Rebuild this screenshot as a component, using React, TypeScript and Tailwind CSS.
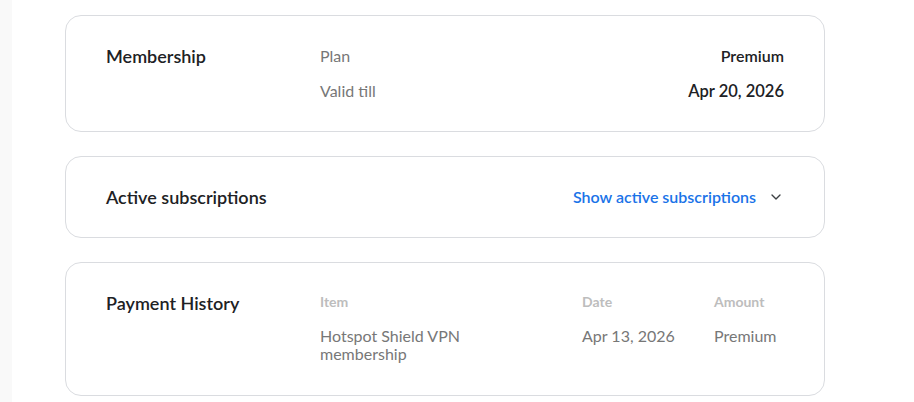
import { ChevronDown } from "lucide-react";

const font = { fontFamily: "Lato, 'Open Sans', sans-serif" };

const Card = ({ children, className = "" }: { children: React.ReactNode; className?: string }) => (
  <div className={`rounded-2xl border border-[#dadce0] bg-white px-10 ${className}`}>{children}</div>
);

const App = () => {
  return (
    <div className="flex min-h-screen bg-white" style={font}>
      <div className="w-3 shrink-0 bg-[#f9f9f9]" />
      <div className="flex w-[760px] flex-col gap-6 pl-[53px] pt-[15px] box-content">
        {/* Membership */}
        <Card className="py-7">
          <div className="flex">
            <h2 className="w-[214px] shrink-0 text-[18px] font-semibold leading-6 text-[#202124]">Membership</h2>
            <div className="flex flex-1 flex-col gap-[11px]">
              <div className="flex justify-between leading-6">
                <span className="text-[16px] text-[#777777]">Plan</span>
                <span className="text-[16px] font-semibold text-[#202124]">Premium</span>
              </div>
              <div className="flex justify-between leading-6">
                <span className="text-[16px] text-[#777777]">Valid till</span>
                <span className="text-[16.5px] font-semibold text-[#202124]">Apr 20, 2026</span>
              </div>
            </div>
          </div>
        </Card>

        {/* Active subscriptions */}
        <Card className="py-7">
          <div className="flex items-center justify-between">
            <h2 className="text-[18px] font-semibold leading-6 text-[#202124]">Active subscriptions</h2>
            <button className="flex items-center gap-3 text-[16px] font-semibold leading-6 text-[#1a73e8]">
              Show active subscriptions
              <ChevronDown className="h-4 w-4 text-[#3c4043]" strokeWidth={2} />
            </button>
          </div>
        </Card>

        {/* Payment history */}
        <Card className="pt-7 pb-8">
          <div className="grid grid-cols-[214px_262px_132px_1fr]">
            <h2 className="text-[18px] font-semibold leading-6 text-[#202124]">Payment History</h2>
            <div>
              <div className="text-[14px] font-bold leading-[22px] text-[#bdbdbd]">Item</div>
              <div className="mt-[14px] w-[170px] text-[16px] leading-[18px] text-[#777777]">Hotspot Shield VPN membership</div>
            </div>
            <div>
              <div className="text-[14px] font-bold leading-[22px] text-[#bdbdbd]">Date</div>
              <div className="mt-[14px] text-[16px] leading-[18px] text-[#777777]">Apr 13, 2026</div>
            </div>
            <div>
              <div className="text-[14px] font-bold leading-[22px] text-[#bdbdbd]">Amount</div>
              <div className="mt-[14px] text-[16px] leading-[18px] text-[#777777]">Premium</div>
            </div>
          </div>
        </Card>
      </div>
    </div>
  );
};

export default App;
